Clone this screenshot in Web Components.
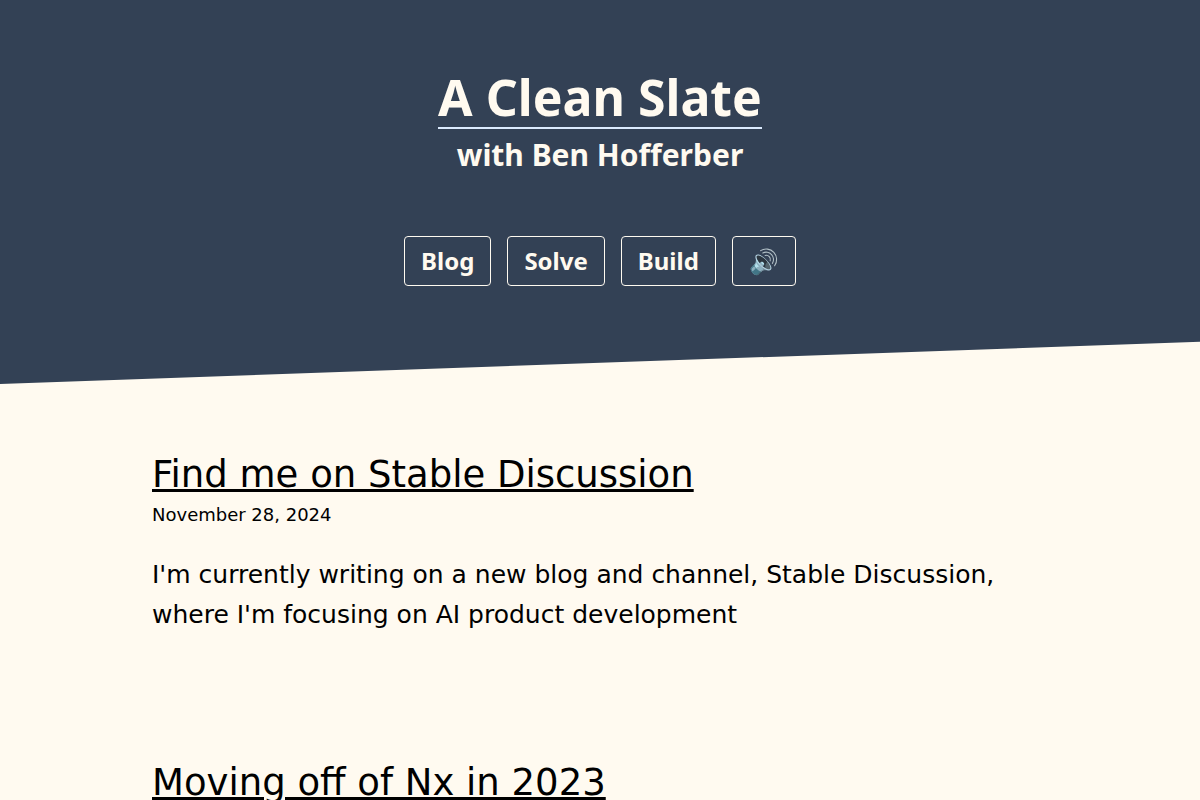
<!DOCTYPE html>
<html lang="en">
<head>
<meta charset="utf-8">
<meta name="viewport" content="width=device-width, initial-scale=1">
<title>A Clean Slate</title>
<style>
    body {
        margin: 0;
        background-color: #fffaf0;
        color: #000;
        font-family: "DejaVu Sans", sans-serif;
        --heading-font: "Noto Sans", sans-serif;
        --slate: #334155;
        --cream: #fffaf0;
    }

    main {
        max-width: 896px;
        margin: 0 auto;
        padding: 67px 24px 0;
    }
</style>
</head>
<body>

<site-header>
    <span slot="title">A Clean Slate</span>
    <span slot="subtitle">with Ben Hofferber</span>
    <nav-link href="#blog">Blog</nav-link>
    <nav-link href="#solve">Solve</nav-link>
    <nav-link href="#build">Build</nav-link>
    <sound-toggle></sound-toggle>
</site-header>

<main>
    <post-summary href="#stable-discussion">
        <span slot="title">Find me on Stable Discussion</span>
        <time slot="date" datetime="2024-11-28">November 28, 2024</time>
        <span slot="excerpt">I'm currently writing on a new blog and channel, Stable Discussion, where I'm focusing on AI product development</span>
    </post-summary>
    <post-summary href="#moving-off-of-nx">
        <span slot="title">Moving off of Nx in 2023</span>
    </post-summary>
</main>

<script>
class SiteHeader extends HTMLElement {

    constructor() {
        super()
        this.attachShadow({mode: "open"})
        this.render()
    }

    render() {
        this.shadowRoot.innerHTML = `
            <style>
                :host {
                    display: block;
                    background-color: var(--slate);
                    color: var(--cream);
                    font-family: var(--heading-font);
                    clip-path: polygon(0 0, 100% 0, 100% 89%, 0 100%);
                }

                header {
                    display: flex;
                    flex-direction: column;
                    align-items: center;
                    padding: 67px 16px 98px;
                }

                h1, h2 {
                    margin: 0;
                    font-weight: 700;
                    text-align: center;
                }

                h1 {
                    font-size: 50px;
                    line-height: 60px;
                    border-bottom: 2px solid #dbeafe;
                }

                h2 {
                    font-size: 30px;
                    line-height: 51px;
                }

                nav {
                    display: flex;
                    flex-wrap: wrap;
                    justify-content: center;
                    gap: 16px;
                    margin-top: 56px;
                }
            </style>
            <header>
                <h1><slot name="title"></slot></h1>
                <h2><slot name="subtitle"></slot></h2>
                <nav><slot></slot></nav>
            </header>
        `
    }
}

const boxStyles = `
    :host {
        display: block;
    }

    a, button {
        display: block;
        box-sizing: border-box;
        height: 50px;
        margin: 0;
        padding: 0 16px;
        border: 1px solid var(--cream);
        border-radius: 4px;
        background: none;
        color: inherit;
        font-family: inherit;
        font-size: 24px;
        font-weight: 700;
        line-height: 48px;
        text-decoration: none;
    }

    a:hover, button:hover {
        cursor: pointer;
    }
`

class NavLink extends HTMLElement {

    constructor() {
        super()
        this.attachShadow({mode: "open"})
        this.render()
    }

    render() {
        this.shadowRoot.innerHTML = `
            <style>${boxStyles}</style>
            <a href="${this.getAttribute("href")}"><slot></slot></a>
        `
    }
}

class SoundToggle extends HTMLElement {

    constructor() {
        super()
        this.attachShadow({mode: "open"})
        this.render()
        this.button = this.shadowRoot.querySelector("button")
    }

    connectedCallback() {
        this.button.addEventListener("click", () => {
            this.button.innerText = this.button.innerText === "🔊" ? "🔇" : "🔊"
        })
    }

    render() {
        this.shadowRoot.innerHTML = `
            <style>${boxStyles}</style>
            <button type="button" aria-label="Toggle sound">🔊</button>
        `
    }
}

class PostSummary extends HTMLElement {

    constructor() {
        super()
        this.attachShadow({mode: "open"})
        this.render()
    }

    render() {
        this.shadowRoot.innerHTML = `
            <style>
                :host {
                    display: block;
                    margin-bottom: 124px;
                }

                h3 {
                    margin: 0;
                    font-size: 37px;
                    font-weight: 400;
                    line-height: 48px;
                }

                a {
                    color: inherit;
                    text-decoration: underline;
                    text-decoration-thickness: 3px;
                    text-underline-offset: 2px;
                }

                .date {
                    font-size: 18px;
                    line-height: 32px;
                }

                p {
                    max-width: 880px;
                    margin: 24px 0 0;
                    font-size: 25px;
                    line-height: 40px;
                }
            </style>
            <article>
                <h3><a href="${this.getAttribute("href")}"><slot name="title"></slot></a></h3>
                <div class="date"><slot name="date"></slot></div>
                <p><slot name="excerpt"></slot></p>
            </article>
        `
    }
}

customElements.define("site-header", SiteHeader)
customElements.define("nav-link", NavLink)
customElements.define("sound-toggle", SoundToggle)
customElements.define("post-summary", PostSummary)
</script>
</body>
</html>
